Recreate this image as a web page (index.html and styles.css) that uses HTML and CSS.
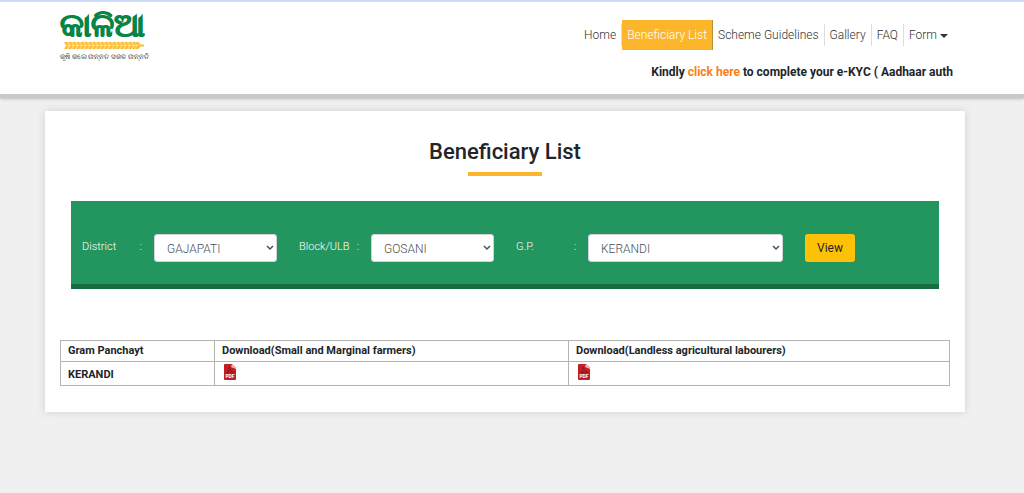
FILE: index.html
```html
<!DOCTYPE html>
<html lang="en">
<head>
<meta charset="utf-8">
<title>Beneficiary List</title>
<link rel="stylesheet" href="styles.css">
</head>
<body>
<header class="header">
  <a class="logo" href="#" aria-label="KALIA">
    <span class="logo-name" lang="or">କାଳିଆ</span>
    <svg class="logo-wheat" viewBox="0 0 84 9" aria-hidden="true">
      <defs>
        <g id="ear"><path d="M0 1.500Q2 0 4 1.500L6 4.500L4 7.500Q2 9 0 7.500L2 4.500Z" fill="#fbbd3c"/><path d="M0 4.500H6" stroke="#ffe2a0" stroke-width=".6"/><path d="M0 1.500L2 4.500L0 7.500" fill="none" stroke="#fff0c8" stroke-width=".6"/></g>
      </defs>
      <use href="#ear" x="4"/><use href="#ear" x="8"/><use href="#ear" x="12"/><use href="#ear" x="16"/><use href="#ear" x="20"/><use href="#ear" x="24"/><use href="#ear" x="28"/><use href="#ear" x="32"/><use href="#ear" x="36"/><use href="#ear" x="40"/><use href="#ear" x="44"/><use href="#ear" x="48"/><use href="#ear" x="52"/><use href="#ear" x="56"/><use href="#ear" x="60"/><use href="#ear" x="64"/><use href="#ear" x="68"/><use href="#ear" x="72"/><use href="#ear" x="75"/>
      <path d="M79 4.500H84" stroke="#fbbd3c" stroke-width="2"/>
    </svg>
    <span class="logo-tag" lang="or">କୃଷି କଲେ ଉନ୍ନତ ସକଳ ଉନ୍ନତି</span>
  </a>
  <div class="header-side">
    <nav class="nav">
      <a class="nav-link" href="#">Home</a>
      <a class="nav-link active" href="#">Beneficiary List</a>
      <a class="nav-link" href="#">Scheme Guidelines</a>
      <a class="nav-link" href="#">Gallery</a>
      <a class="nav-link" href="#">FAQ</a>
      <a class="nav-link last" href="#">Form<span class="caret"></span></a>
    </nav>
    <p class="notice">Kindly <a href="#">click here</a> to complete your e-KYC ( Aadhaar auth</p>
  </div>
</header>
<main class="card">
  <h1 class="title">Beneficiary List</h1>
  <form class="filters">
    <div class="field">
      <label for="district"><span>District</span><span>:</span></label>
      <select id="district"><option>GAJAPATI</option></select>
    </div>
    <div class="field">
      <label for="block"><span>Block/ULB</span><span>:</span></label>
      <select id="block"><option>GOSANI</option></select>
    </div>
    <div class="field wide">
      <label for="gp"><span>G.P.</span><span>:</span></label>
      <select id="gp"><option>KERANDI</option></select>
    </div>
    <button class="view" type="button">View</button>
  </form>
  <table class="results">
    <thead>
      <tr><th class="col-gp">Gram Panchayt</th><th class="col-small">Download(Small and Marginal farmers)</th><th>Download(Landless agricultural labourers)</th></tr>
    </thead>
    <tbody>
      <tr>
        <th>KERANDI</th>
        <td><a href="#" aria-label="Download PDF"><svg class="pdf" viewBox="0 0 12 16"><path d="M1 0H8L12 4V15Q12 16 11 16H1Q0 16 0 15V1Q0 0 1 0Z" fill="#c11e25"/><path d="M8 0L12 4V5L7 3Z" fill="#f0b7b5"/><path d="M5 3Q6 7 10 9M5 3Q6 7 2 10M3 9Q6 7 10 9" fill="none" stroke="#94151b"/><text class="pdf-text" x="6" y="14" text-anchor="middle">PDF</text></svg></a></td>
        <td><a href="#" aria-label="Download PDF"><svg class="pdf" viewBox="0 0 12 16"><path d="M1 0H8L12 4V15Q12 16 11 16H1Q0 16 0 15V1Q0 0 1 0Z" fill="#c11e25"/><path d="M8 0L12 4V5L7 3Z" fill="#f0b7b5"/><path d="M5 3Q6 7 10 9M5 3Q6 7 2 10M3 9Q6 7 10 9" fill="none" stroke="#94151b"/><text class="pdf-text" x="6" y="14" text-anchor="middle">PDF</text></svg></a></td>
      </tr>
    </tbody>
  </table>
</main>
</body>
</html>
```
FILE: styles.css
```css
* { box-sizing: border-box; }
body {
  min-height: 100vh;
  margin: 0;
  background: #f0f0f0;
  color: #212529;
  font-family: Roboto, "Open Sans", sans-serif;
  font-size: 12px;
  font-weight: 300;
}
a { color: inherit; text-decoration: none; }
.header {
  display: flex;
  justify-content: space-between;
  min-height: 98px;
  padding: 6px 71px 0 60px;
  background: #fff;
  border-top: 2px solid #cbdcf8;
  border-bottom: 4px solid #c9c9c9;
  box-shadow: 0 1px 3px #bbb;
}
.logo { display: flex; flex-direction: column; width: 86px; }
.logo-name { height: 33px; color: #078446; font-size: 32px; font-weight: 700; line-height: 34px; white-space: nowrap; -webkit-text-stroke: 1px #078446; }
.logo-wheat { width: 84px; height: 9px; }
.logo-tag { margin-top: 2px; color: #222; font-size: 7px; line-height: 10px; font-weight: 400; text-align: center; white-space: nowrap; }
.header-side { display: flex; flex-direction: column; align-items: flex-end; padding-top: 12px; }
.nav { display: flex; align-items: center; }
.nav-link {
  padding: 0 5px;
  border-right: 1px solid #ddd;
  color: #333;
  font-size: 12px;
  line-height: 22px;
}
.nav-link.active { background: #fdb62b; color: #fff; border-color: #b98f3a; line-height: 30px; }
.nav-link.last { border-right: 0; }
.caret {
  display: inline-block;
  margin-left: 3px;
  border: 4px solid transparent;
  border-top-color: #333;
  border-bottom: 0;
  vertical-align: middle;
}
.notice { margin: 12px 0 0; font-size: 12px; line-height: 20px; font-weight: 700; white-space: nowrap; }
.notice a { color: #fd7e14; }
.card {
  margin: 13px 59px 0 45px;
  padding: 24px 15px 26px;
  background: #fff;
  box-shadow: 0 0 8px #d0d0d0;
}
.title { margin: 0; font-size: 22px; line-height: 34px; font-weight: 500; text-align: center; }
.title::after { content: ""; display: block; width: 74px; height: 4px; margin: 3px auto 0; background: #fdb62b; }
.filters {
  display: flex;
  align-items: flex-start;
  gap: 22px;
  margin: 25px 11px 51px;
  padding: 33px 11px 22px;
  background: #23955f;
  border-bottom: 5px solid #166e42;
}
.field { display: flex; flex: 0 1 195px; gap: 12px; }
.field.wide { flex-basis: 267px; }
.field label { display: flex; flex: 0 0 60px; justify-content: space-between; color: #fff; font-size: 11px; line-height: 26px; }
.field select {
  appearance: none;
  flex: 1;
  min-width: 0;
  height: 28px;
  padding: 2px 16px 0 12px;
  border: 1px solid #ced4da;
  border-radius: 3px;
  background: #fff url("data:image/svg+xml,%3Csvg xmlns='http://www.w3.org/2000/svg' viewBox='0 0 8 6'%3E%3Cpath d='M1 1L4 4L7 1' fill='none' stroke='%23495057' stroke-width='1.5'/%3E%3C/svg%3E") right 2px center / 8px 6px no-repeat;
  color: #495057;
  font: inherit;
}
.view { width: 50px; height: 28px; padding: 0; border: 0; border-radius: 3px; background: #ffc107; color: #212529; font: inherit; font-weight: 400; }
.results { width: 100%; border-collapse: collapse; }
.results th, .results td { height: 21px; padding: 0 7px; border: 1px solid #b4b4b4; font-size: 11px; line-height: 20px; font-weight: 700; text-align: left; }
.results tbody th, .results tbody td { height: 24px; }
.results tbody th { padding-top: 2px; }
.results tbody td { padding-left: 9px; vertical-align: top; }
.col-gp { width: 154px; }
.col-small { width: 354px; }
.pdf { display: block; width: 12px; height: 16px; margin-top: 2px; }
.pdf-text { fill: #fff; font-size: 5px; font-weight: 700; }
```
